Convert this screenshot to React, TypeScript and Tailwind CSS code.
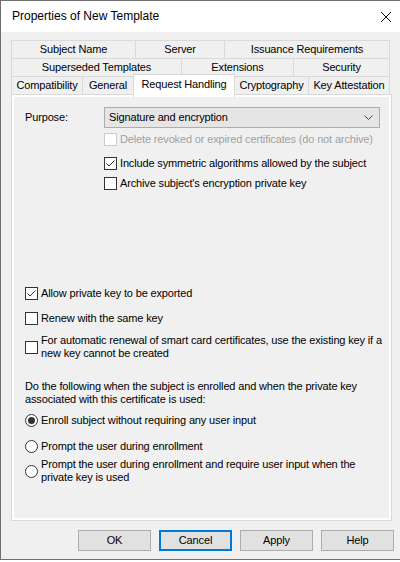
import React from 'react';

const tabRows = [
  [
    { label: 'Subject Name', w: 'w-[124px]' },
    { label: 'Server', w: 'w-[89px]' },
    { label: 'Issuance Requirements', w: 'w-[166px]' },
  ],
  [
    { label: 'Superseded Templates', w: 'w-[170px]' },
    { label: 'Extensions', w: 'w-[112px]' },
    { label: 'Security', w: 'w-[97px]' },
  ],
];

const bottomTabs = [
  { label: 'Compatibility', w: 'w-[71px]' },
  { label: 'General', w: 'w-[51px]' },
  { label: 'Request Handling', w: 'w-[102px]', active: true },
  { label: 'Cryptography', w: 'w-[73px]' },
  { label: 'Key Attestation', w: 'w-[82px]' },
];

const CheckBox = ({ checked = false, disabled = false }: { checked?: boolean; disabled?: boolean }) => (
  <div
    className={`flex h-[13px] w-[13px] shrink-0 items-center justify-center border bg-white ${
      disabled ? 'border-[#cccccc]' : 'border-[#333333]'
    }`}
  >
    {checked && (
      <svg width="11" height="11" viewBox="0 0 11 11">
        <path d="M1.5 5.5 L4 8 L9.5 2.5" fill="none" stroke="#333333" strokeWidth="1" />
      </svg>
    )}
  </div>
);

const Radio = ({ checked = false }: { checked?: boolean }) => (
  <div className="flex h-[13px] w-[13px] shrink-0 items-center justify-center rounded-full border border-[#333333] bg-white">
    {checked && <div className="h-[7px] w-[7px] rounded-full bg-[#333333]" />}
  </div>
);

const Button = ({ label, focused = false }: { label: string; focused?: boolean }) => (
  <div
    className={`flex h-[21px] w-[73px] items-center justify-center bg-[#e1e1e1] text-black ${
      focused ? 'border-2 border-[#0078d7]' : 'border border-[#adadad]'
    }`}
  >
    {label}
  </div>
);

export default function App() {
  return (
    <div className="h-[562px] w-[400px] overflow-hidden bg-white font-['Liberation_Sans',Arial,sans-serif] text-[11px] leading-[13px] tracking-[-0.15px] whitespace-nowrap text-black">
      <div className="flex h-[560px] flex-col border-t border-b border-l border-[#6f6f6f] bg-[#f0f0f0]">
        {/* title bar */}
        <div className="flex h-[31px] items-center justify-between bg-white pr-[7px] pl-[11px]">
          <span className="text-[12px] tracking-normal">Properties of New Template</span>
          <svg width="12" height="12" viewBox="0 0 12 12" className="mr-[1px]">
            <path d="M1 1 L11 11 M11 1 L1 11" stroke="#111" strokeWidth="1" />
          </svg>
        </div>

        {/* tabs */}
        <div className="mt-[8px] ml-[10px] w-[380px]">
          {tabRows.map((row, i) => (
            <div key={i} className="flex h-[18px]">
              {row.map((t, j) => (
                <div
                  key={t.label}
                  className={`flex h-[18px] items-center justify-center border-t border-l border-[#d9d9d9] ${t.w} ${
                    j === row.length - 1 ? 'border-r' : ''
                  }`}
                >
                  {t.label}
                </div>
              ))}
            </div>
          ))}
          <div className="relative z-10 flex h-[18px] items-end">
            {bottomTabs.map((t, j) =>
              t.active ? (
                <div
                  key={t.label}
                  className={`-mb-[3px] flex h-[23px] items-start justify-center border-t border-r border-l border-[#d9d9d9] bg-white pt-[3px] ${t.w}`}
                >
                  {t.label}
                </div>
              ) : (
                <div
                  key={t.label}
                  className={`flex h-[18px] items-center justify-center border-t border-[#d9d9d9] ${t.w} ${
                    bottomTabs[j - 1]?.active ? '' : 'border-l'
                  } ${j === bottomTabs.length - 1 ? 'border-r' : ''}`}
                >
                  {t.label}
                </div>
              )
            )}
          </div>
        </div>

        {/* tab page */}
        <div className="ml-[10px] h-[427px] w-[381px] border border-[#d9d9d9]">
          <div className="flex h-full flex-col border-2 border-white pl-[11px]">
            {/* purpose */}
            <div className="mt-[10px] flex h-[21px] items-center">
              <span className="w-[79px]">Purpose:</span>
              <div className="flex h-[21px] w-[276px] items-center justify-between border border-[#adadad] bg-[#e5e5e5] pr-[6px] pl-[4px]">
                <span>Signature and encryption</span>
                <svg width="9" height="5" viewBox="0 0 9 5">
                  <path d="M0.5 0.5 L4.5 4.5 L8.5 0.5" fill="none" stroke="#444" strokeWidth="1" />
                </svg>
              </div>
            </div>

            <div className="ml-[79px]">
              <div className="mt-[5px] flex h-[13px] items-center gap-[3px] text-[#a0a0a0]">
                <CheckBox disabled />
                <span>Delete revoked or expired certificates (do not archive)</span>
              </div>
              <div className="mt-[11px] flex h-[13px] items-center gap-[3px]">
                <CheckBox checked />
                <span>Include symmetric algorithms allowed by the subject</span>
              </div>
              <div className="mt-[7px] flex h-[13px] items-center gap-[3px]">
                <CheckBox />
                <span>Archive subject&apos;s encryption private key</span>
              </div>
            </div>

            <div className="mt-[97px] flex h-[13px] items-center gap-[3px]">
              <CheckBox checked />
              <span>Allow private key to be exported</span>
            </div>
            <div className="mt-[12px] flex h-[13px] items-center gap-[3px]">
              <CheckBox />
              <span>Renew with the same key</span>
            </div>
            <div className="mt-[9px] flex items-center gap-[3px]">
              <CheckBox />
              <span>
                For automatic renewal of smart card certificates, use the existing key if a
                <br />
                new key cannot be created
              </span>
            </div>

            <p className="mt-[20px]">
              Do the following when the subject is enrolled and when the private key
              <br />
              associated with this certificate is used:
            </p>
            <div className="mt-[8px] flex h-[13px] items-center gap-[3px]">
              <Radio checked />
              <span>Enroll subject without requiring any user input</span>
            </div>
            <div className="mt-[13px] flex h-[13px] items-center gap-[3px]">
              <Radio />
              <span>Prompt the user during enrollment</span>
            </div>
            <div className="mt-[5px] flex items-center gap-[3px]">
              <Radio />
              <span>
                Prompt the user during enrollment and require user input when the
                <br />
                private key is used
              </span>
            </div>
          </div>
        </div>

        {/* buttons */}
        <div className="mt-[9px] flex gap-[8px] pl-[77px]">
          <Button label="OK" />
          <Button label="Cancel" focused />
          <Button label="Apply" />
          <Button label="Help" />
        </div>
      </div>
    </div>
  );
}
